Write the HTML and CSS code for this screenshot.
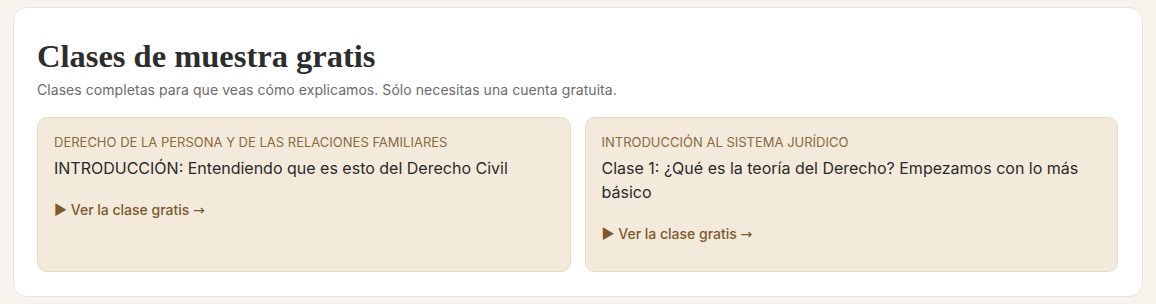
FILE: index.html
```html
<!DOCTYPE html>
<html lang="es">

<head>
    <meta charset="UTF-8">
    <meta name="viewport" content="width=device-width, initial-scale=1.0">
    <title>Clases de muestra gratis</title>
    <link rel="stylesheet" href="styles.css">
</head>

<body>
    <section class="panel">
        <!-- Heading -->
        <h2 class="panel-title">Clases de muestra gratis</h2>
        <p class="panel-sub">Clases completas para que veas cómo explicamos. Sólo necesitas una cuenta gratuita.</p>

        <!-- Sample classes -->
        <div class="sample-grid">
            <a class="sample-card" href="#">
                <div class="sample-course">DERECHO DE LA PERSONA Y DE LAS RELACIONES FAMILIARES</div>
                <div class="sample-name">INTRODUCCIÓN: Entendiendo que es esto del Derecho Civil</div>
                <div class="sample-link">▶ Ver la clase gratis <span class="arrow">→</span></div>
            </a>
            <a class="sample-card" href="#">
                <div class="sample-course">INTRODUCCIÓN AL SISTEMA JURÍDICO</div>
                <div class="sample-name">Clase 1: ¿Qué es la teoría del Derecho? Empezamos con lo más básico</div>
                <div class="sample-link">▶ Ver la clase gratis <span class="arrow">→</span></div>
            </a>
        </div>
    </section>
</body>

</html>
```

FILE: styles.css
```css
/* Reset */
* {
    margin: 0;
    padding: 0;
    box-sizing: border-box;
}

body {
    background-color: #f7f4ee;
    padding: 7px 13px;
    font-family: "Inter", "Noto Sans", sans-serif;
    color: #2a2a2a;
}

/* Main white panel */
.panel {
    background-color: #fff;
    border: 1px solid #ebe5da;
    border-radius: 14px;
    padding: 29px 24px 24px 23px;
}

.panel-title {
    font-family: "Liberation Serif", "DejaVu Serif", serif;
    font-size: 32.5px;
    font-weight: 700;
    line-height: 38px;
    color: #2b2e2c;
}

.panel-sub {
    margin-top: 5px;
    font-size: 14px;
    letter-spacing: 0.06px;
    line-height: 20px;
    color: #6b6b6b;
}

/* Cards */
.sample-grid {
    display: grid;
    grid-template-columns: 1fr 1fr;
    gap: 14px;
    margin-top: 17px;
}

.sample-card {
    display: block;
    background-color: #f4eadb;
    border: 1px solid #e7dbc2;
    border-radius: 10px;
    padding: 16px 16px 27px 16px;
    text-decoration: none;
    color: inherit;
}

.sample-course {
    font-size: 13px;
    line-height: 16px;
    color: #8a6b3e;
}

.sample-name {
    margin-top: 6px;
    font-size: 16px;
    line-height: 24px;
    color: #2a2a2a;
}

.sample-link {
    margin-top: 20px;
    font-size: 14px;
    line-height: 20px;
    font-weight: 500;
    color: #7a5a2c;
}

.arrow {
    font-family: "DejaVu Sans", sans-serif;
    font-weight: 400;
}
```
